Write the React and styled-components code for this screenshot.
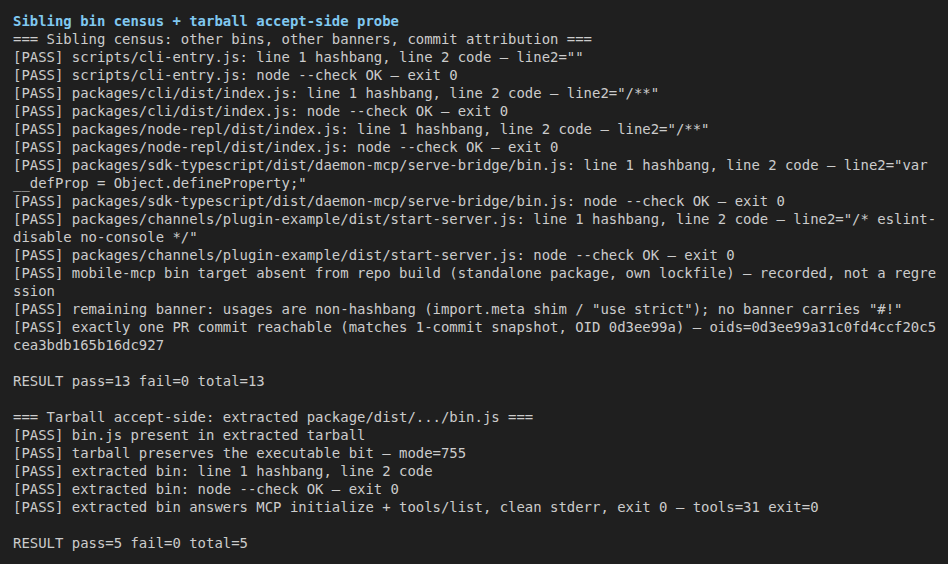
import React from "react";
import styled, { createGlobalStyle } from "styled-components";

const Global = createGlobalStyle`
  html, body { margin: 0; padding: 0; background: #1f1f1f; }
  #root { min-height: 100vh; }
`;

const Terminal = styled.div`
  box-sizing: border-box;
  min-height: 100vh;
  background: #1f1f1f;
  padding: 12px 0 0 13px;
  font-family: "DejaVu Sans Mono", monospace;
  font-size: 13.95px;
  line-height: 18px;
  color: #cccccc;
`;

const Title = styled.div`
  font-weight: bold;
  color: #80c8f0;
  white-space: pre;
`;

const Output = styled.pre`
  margin: 0;
  width: 110.5ch;
  font: inherit;
  white-space: pre-wrap;
  word-break: break-all;
`;

const Line = styled.div`
  min-height: 18px;
`;

const lines = [
  "=== Sibling census: other bins, other banners, commit attribution ===",
  '[PASS] scripts/cli-entry.js: line 1 hashbang, line 2 code — line2=""',
  "[PASS] scripts/cli-entry.js: node --check OK — exit 0",
  '[PASS] packages/cli/dist/index.js: line 1 hashbang, line 2 code — line2="/**"',
  "[PASS] packages/cli/dist/index.js: node --check OK — exit 0",
  '[PASS] packages/node-repl/dist/index.js: line 1 hashbang, line 2 code — line2="/**"',
  "[PASS] packages/node-repl/dist/index.js: node --check OK — exit 0",
  '[PASS] packages/sdk-typescript/dist/daemon-mcp/serve-bridge/bin.js: line 1 hashbang, line 2 code — line2="var __defProp = Object.defineProperty;"',
  "[PASS] packages/sdk-typescript/dist/daemon-mcp/serve-bridge/bin.js: node --check OK — exit 0",
  '[PASS] packages/channels/plugin-example/dist/start-server.js: line 1 hashbang, line 2 code — line2="/* eslint-disable no-console */"',
  "[PASS] packages/channels/plugin-example/dist/start-server.js: node --check OK — exit 0",
  "[PASS] mobile-mcp bin target absent from repo build (standalone package, own lockfile) — recorded, not a regression",
  '[PASS] remaining banner: usages are non-hashbang (import.meta shim / "use strict"); no banner carries "#!"',
  "[PASS] exactly one PR commit reachable (matches 1-commit snapshot, OID 0d3ee99a) — oids=0d3ee99a31c0fd4ccf20c5cea3bdb165b16dc927",
  "",
  "RESULT pass=13 fail=0 total=13",
  "",
  "=== Tarball accept-side: extracted package/dist/.../bin.js ===",
  "[PASS] bin.js present in extracted tarball",
  "[PASS] tarball preserves the executable bit — mode=755",
  "[PASS] extracted bin: line 1 hashbang, line 2 code",
  "[PASS] extracted bin: node --check OK — exit 0",
  "[PASS] extracted bin answers MCP initialize + tools/list, clean stderr, exit 0 — tools=31 exit=0",
  "",
  "RESULT pass=5 fail=0 total=5",
];

export default function App() {
  return (
    <>
      <Global />
      <Terminal>
        <Title>Sibling bin census + tarball accept-side probe</Title>
        <Output>
          {lines.map((l, i) => (
            <Line key={i}>{l}</Line>
          ))}
        </Output>
      </Terminal>
    </>
  );
}
